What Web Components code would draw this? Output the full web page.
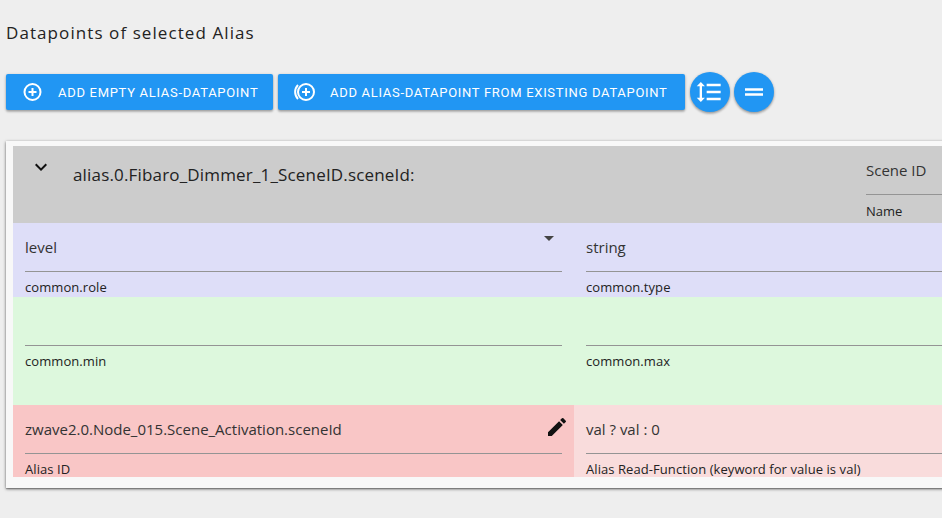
<!DOCTYPE html>
<html><head><meta charset="utf-8">
<style>
html,body{margin:0;padding:0;width:942px;height:518px;overflow:hidden;background:#eee;font-family:"Open Sans",sans-serif;color:#222}
</style></head><body>
<template id="t-btn"><style>
:host{display:inline-flex;align-items:center;box-sizing:border-box;height:36px;background:#2196f3;color:#fff;border-radius:2px;padding:0 16px;
font:400 13px/1 Roboto,sans-serif;letter-spacing:.7px;box-shadow:0 1px 3px rgba(0,0,0,.3),0 2px 2px rgba(0,0,0,.12);white-space:nowrap;text-transform:uppercase}
::slotted(svg){margin-right:16px;flex:none}
</style><slot name="icon"></slot><slot></slot></template>
<template id="t-fab"><style>
:host{display:flex;align-items:center;justify-content:center;width:40px;height:40px;border-radius:50%;background:#2196f3;box-shadow:0 1px 3px rgba(0,0,0,.3),0 2px 2px rgba(0,0,0,.12)}
</style><slot></slot></template>
<template id="t-field"><style>
:host{display:block;position:relative;box-sizing:border-box;padding:0 12px;height:var(--h,74px);overflow:hidden;background:var(--bg,transparent);flex:none;width:561px}
.v{height:49px;box-sizing:border-box;padding-top:14px;font-size:15px;line-height:20px;color:#333;border-bottom:1px solid #949494;white-space:nowrap}
.l{font-size:13px;line-height:16px;margin-top:7px;color:#222;white-space:nowrap;letter-spacing:.07px}
::slotted(svg){position:absolute}
</style><div class="v"><slot name="value"></slot></div><div class="l"><slot name="label"></slot></div><slot name="icon"></slot></template>
<template id="t-row"><style>
:host{display:flex;background:var(--bg);height:var(--h)}
</style><slot></slot></template>
<template id="t-card"><style>
:host{display:block;box-sizing:border-box;margin:29px 0 0 6px;width:1200px;height:347px;padding:5px 0 11px 7px;background:#f8f8f8;box-shadow:0 1px 3px rgba(0,0,0,.55),0 1px 1px rgba(0,0,0,.2)}
</style><slot></slot></template>
<template id="t-head"><style>
:host{display:flex;height:77px;background:#ccc;position:relative}
.ch{position:absolute;left:16px;top:9px}
.t{margin:18px 0 0 60px;font-size:17px;line-height:22px;letter-spacing:.17px;width:793px;flex:none;white-space:nowrap;color:#222}
.r{flex:1}
.n{font-size:15px;line-height:20px;padding-top:14px;height:49px;box-sizing:border-box;border-bottom:1px solid #949494;color:#333}
.l{font-size:13px;line-height:16px;margin-top:8px}
</style><svg class="ch" width="24" height="24" viewBox="0 0 24 24" fill="#111"><path d="M7.41 8.59 12 13.170l4.590-4.580L18 10l-6 6-6-6z"/></svg><div class="t"><slot></slot></div><div class="r"><div class="n"><slot name="name"></slot></div><div class="l"><slot name="sub"></slot></div></div></template>
<template id="t-page"><style>
:host{display:block}
h1{margin:0;padding:22px 0 0 6px;font-size:17px;font-weight:400;line-height:22px;letter-spacing:1.08px;color:#222}
.bar{display:flex;align-items:center;gap:5px;margin:28px 0 0 6px;height:40px}
</style><h1><slot name="title"></slot></h1><div class="bar"><slot name="bar"></slot></div><slot></slot></template>

<script>
const def=(n)=>customElements.define(n,class extends HTMLElement{constructor(){super();this.attachShadow({mode:"open"}).appendChild(document.getElementById("t-"+n.split("-")[1]).content.cloneNode(true))}});
["x-btn","x-fab","x-field","x-row","x-card","x-head","x-page"].forEach(def);
</script>

<x-page>
<span slot="title">Datapoints of selected Alias</span>
<x-btn slot="bar" style="width:267px"><svg slot="icon" width="20" height="20" viewBox="0 0 20 20" fill="none" stroke="#fff" stroke-width="2"><circle cx="10.500" cy="10" r="8"/><path d="M10.500 6v8M6.500 10h8"/></svg>Add empty alias-datapoint</x-btn>
<x-btn slot="bar" style="padding-left:15px;width:407px"><svg slot="icon" style="margin-right:14px" width="23" height="20" viewBox="0 0 23 20" fill="none" stroke="#fff" stroke-width="2"><circle cx="13" cy="10" r="8"/><path d="M13 6v8M9 10h8M5 3a10 10 0 0 0 0 14"/></svg>Add alias-datapoint from existing datapoint</x-btn>
<x-fab slot="bar"><svg width="28" height="28" viewBox="0 0 24 24" fill="#fff" style="margin-left:-2px"><path d="M6 7h2.500L5 3.500 1.500 7H4v10H1.500L5 20.500 8.500 17H6V7zm4-2v2h12V5H10zm0 14h12v-2H10v2zm0-6h12v-2H10v2z"/></svg></x-fab>
<x-fab slot="bar" style="margin-left:-1px"><svg width="24" height="24" viewBox="0 0 24 24" fill="#fff"><path d="M3 8.200h18v2.600H3zM3 13.200h18v2.600H3z"/></svg></x-fab>
<x-card>
<x-head>alias.0.Fibaro_Dimmer_1_SceneID.sceneId:<span slot="name">Scene ID</span><span slot="sub">Name</span></x-head>
<x-row style="--bg:#dedef8;--h:74px">
<x-field><span slot="value">level</span><span slot="label">common.role</span><svg slot="icon" style="right:19px;top:11px" width="12" height="12" viewBox="0 0 12 12" fill="#444"><path d="M1 2h10L6 7z"/></svg></x-field>
<x-field><span slot="value">string</span><span slot="label">common.type</span></x-field>
</x-row>
<x-row style="--bg:#ddf8dd;--h:108px">
<x-field><span slot="label">common.min</span></x-field>
<x-field><span slot="label">common.max</span></x-field>
</x-row>
<x-row style="--bg:#f9dcdc;--h:72px">
<x-field style="--bg:#f9c6c6;--h:72px"><span slot="value">zwave2.0.Node_015.Scene_Activation.sceneId</span><span slot="label">Alias ID</span><svg slot="icon" style="right:5px;top:10px" width="24" height="24" viewBox="0 0 24 24" fill="#111"><path d="M3 17.250V21h3.750L17.810 9.940l-3.750-3.750L3 17.250zM20.710 7.040a1 1 0 0 0 0-1.410l-2.340-2.340a1 1 0 0 0-1.410 0l-1.830 1.830 3.750 3.750 1.830-1.830z"/></svg></x-field>
<x-field><span slot="value">val ? val : 0</span><span slot="label">Alias Read-Function (keyword for value is val)</span></x-field>
</x-row>
</x-card>
</x-page>
</body></html>
